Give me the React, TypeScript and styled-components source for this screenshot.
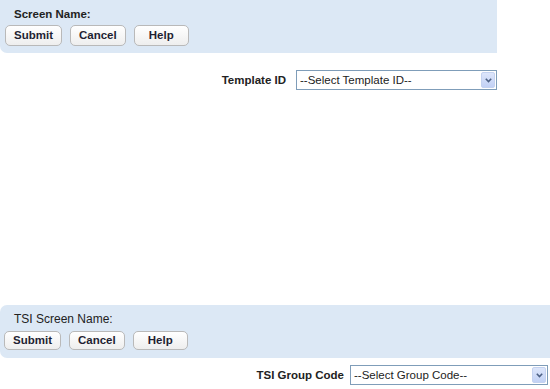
import React from "react";
import styled, { createGlobalStyle } from "styled-components";

const Global = createGlobalStyle`
  html, body { margin: 0; padding: 0; background: #fff; }
  body { font-family: "Liberation Sans", Arial, sans-serif; color: #222; }
`;

const Page = styled.div`
  width: 550px;
  height: 389px;
  overflow: hidden;
  display: flex;
  flex-direction: column;
`;

const Panel = styled.div<{ $width: number; $radius: string; $height: number; $pt: number }>`
  width: ${(p) => p.$width}px;
  height: ${(p) => p.$height}px;
  box-sizing: border-box;
  background: #dce8f5;
  border-radius: ${(p) => p.$radius};
  padding: ${(p) => p.$pt}px 0 0 0;
  display: flex;
  flex-direction: column;
`;

const PanelTitle = styled.div<{ $bold?: boolean }>`
  font-size: ${(p) => (p.$bold ? "11.5px" : "12px")};
  font-weight: ${(p) => (p.$bold ? "bold" : "normal")};
  line-height: 14px;
  padding-left: 14px;
  color: #222;
`;

const ButtonBar = styled.div<{ $mt: number; $pl: number }>`
  display: flex;
  gap: 8px;
  margin-top: ${(p) => p.$mt}px;
  padding-left: ${(p) => p.$pl}px;
`;

const Button = styled.button<{ $h: number }>`
  height: ${(p) => p.$h}px;
  min-width: 55px;
  padding: 0 8px;
  box-sizing: border-box;
  font-family: "Liberation Sans", Arial, sans-serif;
  font-size: 11.5px;
  font-weight: bold;
  color: #1f1f33;
  background: linear-gradient(#ffffff, #eeeeee);
  border: 1px solid #b9b9b9;
  border-radius: 5px;
  line-height: 1;
`;

const FieldRow = styled.div<{ $width: number; $mt: number; $gap: number }>`
  width: ${(p) => p.$width}px;
  margin-top: ${(p) => p.$mt}px;
  display: flex;
  justify-content: flex-end;
  align-items: center;
  gap: ${(p) => p.$gap}px;
`;

const FieldLabel = styled.label`
  font-size: 11.5px;
  font-weight: bold;
  color: #222;
`;

const SelectWrap = styled.div<{ $width: number }>`
  position: relative;
  width: ${(p) => p.$width}px;
  height: 20px;
`;

const Select = styled.select`
  appearance: none;
  -webkit-appearance: none;
  width: 100%;
  height: 100%;
  box-sizing: border-box;
  border: 1px solid #7f9db9;
  border-radius: 0;
  background: #fff;
  font-family: "Liberation Sans", Arial, sans-serif;
  font-size: 11.5px;
  color: #222;
  padding: 0 0 0 3px;
  outline: none;
`;

const Arrow = styled.span`
  position: absolute;
  right: 2px;
  top: 2px;
  width: 14px;
  height: 16px;
  box-sizing: border-box;
  background: linear-gradient(#dde6fb, #c2d1f5);
  border: 1px solid #c4d2f0;
  border-radius: 2px;
  display: flex;
  align-items: center;
  justify-content: center;
  pointer-events: none;
`;

const Spacer = styled.div`
  flex: 1;
`;

const BottomGap = styled.div`
  height: 4px;
  flex: none;
`;

const Chevron = () => (
  <svg width="7" height="5" viewBox="0 0 7 5">
    <path d="M0.8 0.8 L3.5 3.5 L6.2 0.8" fill="none" stroke="#4d6185" strokeWidth="1.6" />
  </svg>
);

const SelectField = ({ width, text }: { width: number; text: string }) => (
  <SelectWrap $width={width}>
    <Select defaultValue="">
      <option value="">{text}</option>
    </Select>
    <Arrow>
      <Chevron />
    </Arrow>
  </SelectWrap>
);

export default function App() {
  return (
    <Page>
      <Global />
      <Panel $width={497} $height={53} $radius="0 0 0 7px" $pt={7}>
        <PanelTitle $bold>Screen Name:</PanelTitle>
        <ButtonBar $mt={4} $pl={5}>
          <Button $h={21}>Submit</Button>
          <Button $h={21}>Cancel</Button>
          <Button $h={21}>Help</Button>
        </ButtonBar>
      </Panel>
      <FieldRow $width={497} $mt={17} $gap={10}>
        <FieldLabel>Template ID</FieldLabel>
        <SelectField width={201} text="--Select Template ID--" />
      </FieldRow>
      <Spacer />
      <Panel $width={550} $height={53} $radius="7px 0 0 7px" $pt={7}>
        <PanelTitle>TSI Screen Name:</PanelTitle>
        <ButtonBar $mt={5} $pl={4}>
          <Button $h={19}>Submit</Button>
          <Button $h={19}>Cancel</Button>
          <Button $h={19}>Help</Button>
        </ButtonBar>
      </Panel>
      <FieldRow $width={548} $mt={7} $gap={6}>
        <FieldLabel>TSI Group Code</FieldLabel>
        <SelectField width={198} text="--Select Group Code--" />
      </FieldRow>
      <BottomGap />
    </Page>
  );
}
